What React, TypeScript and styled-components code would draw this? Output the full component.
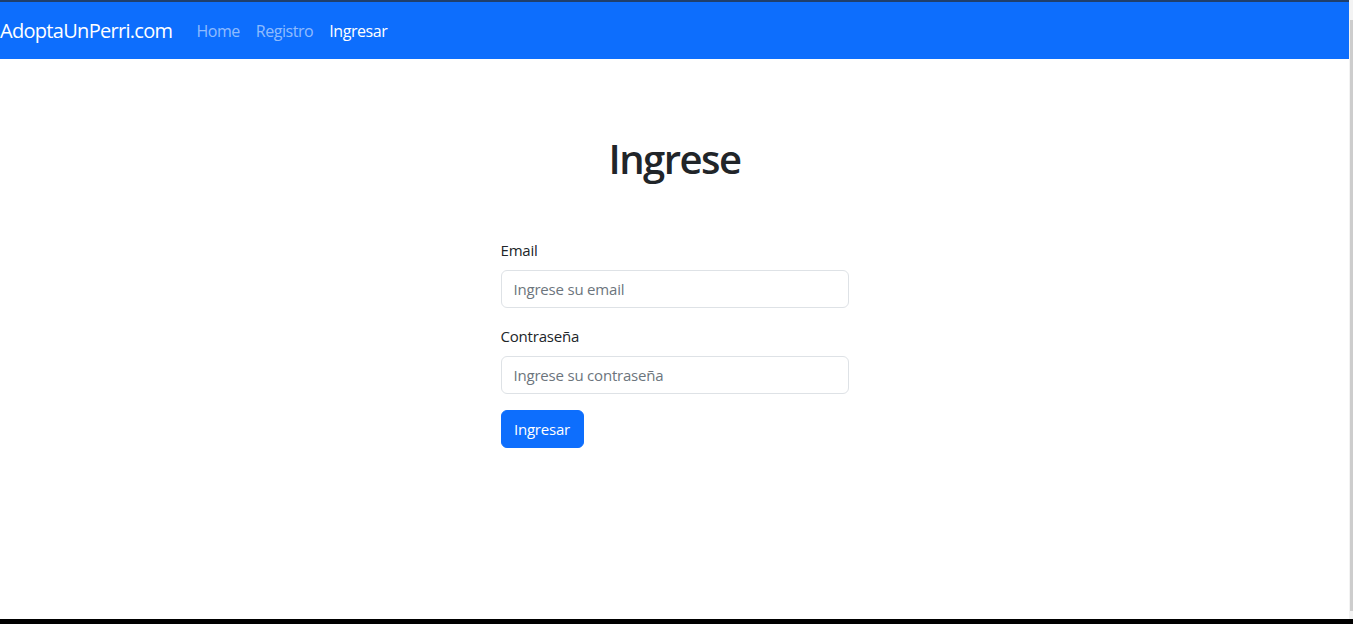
import React from "react";
import styled, { createGlobalStyle } from "styled-components";

const Global = createGlobalStyle`
  html, body { margin: 0; padding: 0; background: #fff; }
  * { box-sizing: border-box; }
  body { font-family: "Open Sans", "Noto Sans", "Liberation Sans", sans-serif; color: #212529; }
`;

const Screen = styled.div`
  width: 1353px;
  height: 624px;
  display: grid;
  grid-template-columns: 1fr 4px;
  grid-template-rows: 1fr 5px;
  overflow: hidden;
`;

const Page = styled.div`
  display: flex;
  flex-direction: column;
  border-top: 2px solid #1f3f6c;
  background: #fff;
`;

const Scrollbar = styled.div`
  background: #f3f3f3;
  display: flex;
  justify-content: flex-end;
  padding: 20px 0 8px;
`;

const Thumb = styled.div`
  width: 3px;
  height: 100%;
  background: #cdcdcd;
`;

const BottomBar = styled.div`
  grid-column: 1 / span 2;
  background: #000;
`;

const Navbar = styled.nav`
  height: 57px;
  background: #0d6efd;
  display: flex;
  align-items: center;
  padding: 0;
`;

const Brand = styled.a`
  font-size: 20px;
  line-height: 30px;
  color: #fff;
  margin-right: 16px;
  text-decoration: none;
  letter-spacing: -0.7px;
`;

const NavLinks = styled.div`
  display: flex;
`;

const NavLink = styled.a<{ $active?: boolean }>`
  font-size: 16px;
  line-height: 24px;
  padding: 8px;
  text-decoration: none;
  letter-spacing: -0.45px;
  color: ${(p) => (p.$active ? "#ffffff" : "rgba(255,255,255,0.55)")};
`;

const Main = styled.main`
  display: flex;
  flex-direction: column;
  align-items: center;
  padding-top: 76px;
`;

const Title = styled.h1`
  margin: 0 0 55px;
  font-size: 40px;
  line-height: 48px;
  font-weight: 600;
  letter-spacing: -1.5px;
`;

const Form = styled.form`
  width: 348px;
  display: flex;
  flex-direction: column;
`;

const Field = styled.div`
  display: flex;
  flex-direction: column;
  margin-bottom: 16px;
`;

const Label = styled.label`
  font-size: 15px;
  line-height: 24px;
  margin-bottom: 8px;
  letter-spacing: -0.2px;
`;

const Input = styled.input`
  height: 38px;
  width: 100%;
  padding: 6px 12px;
  font-family: inherit;
  font-size: 15px;
  letter-spacing: -0.2px;
  color: #212529;
  border: 1px solid #dee2e6;
  border-radius: 6px;
  outline: none;
  &::placeholder { color: #6c757d; }
`;

const Button = styled.button`
  align-self: flex-start;
  width: 83px;
  height: 38px;
  padding: 0;
  font-family: inherit;
  font-size: 15px;
  letter-spacing: -0.2px;
  color: #fff;
  background: #0d6efd;
  border: 1px solid #0d6efd;
  border-radius: 6px;
  cursor: pointer;
`;

export default function App() {
  return (
    <>
      <Global />
      <Screen>
        <Page>
          <Navbar>
            <Brand href="#">AdoptaUnPerri.com</Brand>
            <NavLinks>
              <NavLink href="#">Home</NavLink>
              <NavLink href="#">Registro</NavLink>
              <NavLink href="#" $active>Ingresar</NavLink>
            </NavLinks>
          </Navbar>
          <Main>
            <Title>Ingrese</Title>
            <Form onSubmit={(e) => e.preventDefault()}>
              <Field>
                <Label htmlFor="email">Email</Label>
                <Input id="email" type="email" placeholder="Ingrese su email" />
              </Field>
              <Field>
                <Label htmlFor="pass">Contraseña</Label>
                <Input id="pass" type="password" placeholder="Ingrese su contraseña" />
              </Field>
              <Button type="submit">Ingresar</Button>
            </Form>
          </Main>
        </Page>
        <Scrollbar>
          <Thumb />
        </Scrollbar>
        <BottomBar />
      </Screen>
    </>
  );
}
